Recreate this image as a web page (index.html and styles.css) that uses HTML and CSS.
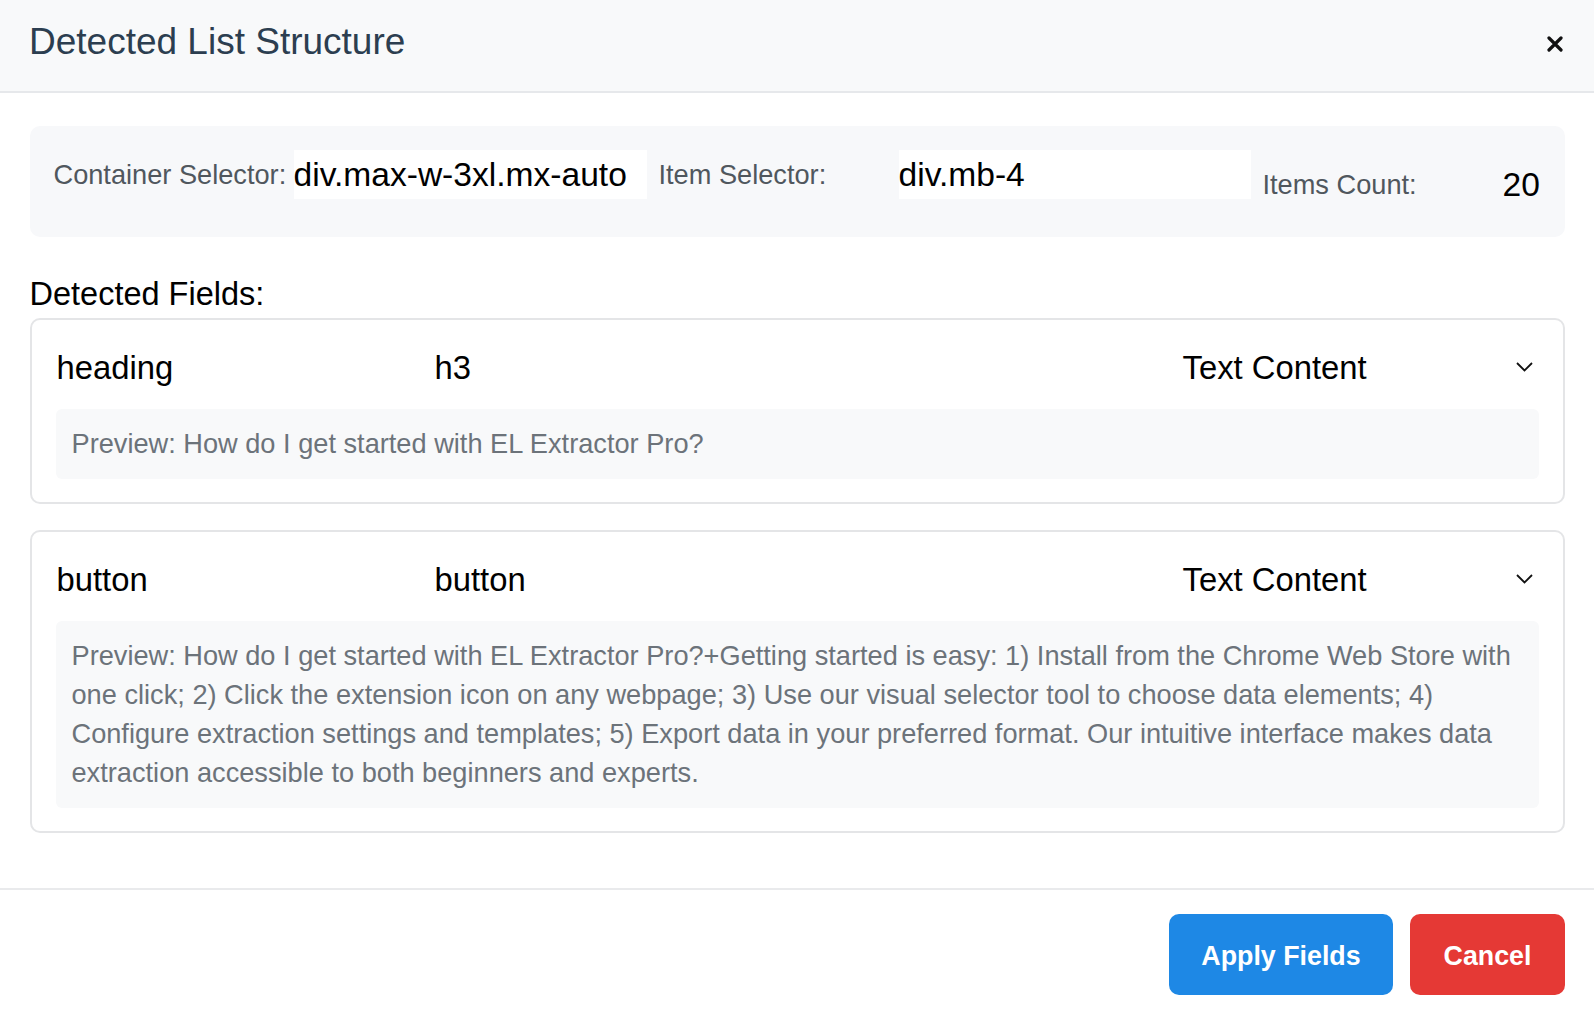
FILE: index.html
```html
<!DOCTYPE html>
<html lang="en">
<head>
<meta charset="utf-8">
<title>Detected List Structure</title>
<link rel="stylesheet" href="styles.css">
</head>
<body>
<div class="modal">
  <header class="modal-header">
    <h2 class="modal-title">Detected List Structure</h2>
    <button class="close-btn" aria-label="Close">
      <svg viewBox="0 0 16 16" width="16" height="16"><path d="M2 2 L14 14 M14 2 L2 14" stroke="#111" stroke-width="3.2" stroke-linecap="round" fill="none"/></svg>
    </button>
  </header>
  <main class="modal-body">
    <section class="summary">
      <div class="summary-group">
        <span class="summary-label">Container Selector:</span>
        <span class="summary-value boxed">div.max-w-3xl.mx-auto</span>
      </div>
      <div class="summary-group">
        <span class="summary-label">Item Selector:</span>
        <span class="summary-value boxed">div.mb-4</span>
      </div>
      <div class="summary-group count">
        <span class="summary-label">Items Count:</span>
        <span class="summary-value">20</span>
      </div>
    </section>
    <h4 class="fields-title">Detected Fields:</h4>
    <div class="field-card">
      <div class="field-row">
        <span class="field-name">heading</span>
        <span class="field-selector">h3</span>
        <div class="field-type">
          <span>Text Content</span>
          <svg class="chevron" viewBox="0 0 17 10" width="17" height="10"><path d="M1 1 L8.5 8.5 L16 1" stroke="#111" stroke-width="1.8" fill="none"/></svg>
        </div>
      </div>
      <div class="preview">Preview: How do I get started with EL Extractor Pro?</div>
    </div>
    <div class="field-card second">
      <div class="field-row">
        <span class="field-name">button</span>
        <span class="field-selector">button</span>
        <div class="field-type">
          <span>Text Content</span>
          <svg class="chevron" viewBox="0 0 17 10" width="17" height="10"><path d="M1 1 L8.5 8.5 L16 1" stroke="#111" stroke-width="1.8" fill="none"/></svg>
        </div>
      </div>
      <div class="preview">Preview: How do I get started with EL Extractor Pro?+Getting started is easy: 1) Install from the Chrome Web Store with one click; 2) Click the extension icon on any webpage; 3) Use our visual selector tool to choose data elements; 4) Configure extraction settings and templates; 5) Export data in your preferred format. Our intuitive interface makes data extraction accessible to both beginners and experts.</div>
    </div>
  </main>
  <footer class="modal-footer">
    <button class="btn btn-primary">Apply Fields</button>
    <button class="btn btn-danger">Cancel</button>
  </footer>
</div>
</body>
</html>
```
FILE: styles.css
```css
* { box-sizing: border-box; }

html, body {
  margin: 0;
  padding: 0;
  background: #ffffff;
}

body {
  font-family: "Liberation Sans", Arial, Helvetica, sans-serif;
  color: #111;
}

.modal {
  width: 1594px;
  height: 1018px;
  display: flex;
  flex-direction: column;
  overflow: hidden;
}

.modal-header {
  height: 93px;
  flex: none;
  background: #f8f9fa;
  border-bottom: 2px solid #e6e8eb;
  display: flex;
  justify-content: space-between;
  align-items: flex-start;
  padding: 21px 31px 0 29px;
}

.modal-title {
  margin: 0;
  font-size: 37px;
  line-height: 42px;
  font-weight: 400;
  color: #2c3e50;
}

.close-btn {
  border: 0;
  background: transparent;
  padding: 0;
  margin-top: 15px;
  width: 16px;
  height: 16px;
  display: flex;
}

.modal-body {
  flex: 1;
  padding: 33px 29.5px 0 29.5px;
}

.summary {
  background: #f7f8fa;
  border-radius: 10px;
  padding: 24px 24px 38px 24px;
  display: flex;
  align-items: flex-start;
  gap: 12px;
  margin-bottom: 39px;
}

.summary-group {
  display: flex;
  align-items: center;
  height: 49px;
}

.summary-group:nth-child(1) { width: 593px; }
.summary-group:nth-child(2) { width: 592px; }
.summary-group.count { flex: 1; margin-top: 10px; margin-bottom: -10px; }

.summary-label {
  width: 240px;
  flex: none;
  font-size: 27.2px;
  color: #50575e;
}

.summary-value {
  font-size: 33.6px;
  color: #000;
}

.summary-value.boxed {
  width: 353px;
  height: 49px;
  background: #ffffff;
  display: flex;
  align-items: center;
  padding-left: 0;
}

.fields-title {
  margin: 0 0 5px 0;
  font-size: 32.5px;
  line-height: 37px;
  font-weight: 400;
  color: #000;
}

.field-card {
  border: 2px solid #e4e5e7;
  border-radius: 10px;
  padding: 23px 24px 23px 24px;
}

.field-card.second {
  margin-top: 26px;
}

.field-row {
  display: grid;
  grid-template-columns: 379px 1fr 356px;
  align-items: center;
  height: 50px;
  margin-bottom: 16px;
}

.field-name,
.field-selector,
.field-type span {
  font-size: 32.8px;
  color: #000;
}

.field-name { padding-left: 1px; }

.field-type {
  display: flex;
  justify-content: space-between;
  align-items: center;
  padding-right: 6px;
}

.chevron { margin-top: -2px; }

.preview {
  background: #f8f9fa;
  border-radius: 6px;
  padding: 15px 16px 16px 16px;
  font-size: 27.2px;
  line-height: 39px;
  color: #6c737a;
}

.modal-footer {
  flex: none;
  border-top: 2px solid #e9eaec;
  padding: 24px 29px 23px 29px;
  display: flex;
  justify-content: flex-end;
  gap: 17px;
}

.btn {
  height: 81px;
  border: 0;
  border-radius: 10px;
  padding: 4px 0 0 0;
  font-family: "Liberation Sans", Arial, sans-serif;
  font-size: 26.8px;
  font-weight: 700;
  color: #ffffff;
}

.btn-primary {
  background: #1e88e5;
  width: 224px;
}

.btn-danger {
  background: #e53935;
  width: 155px;
}
```
